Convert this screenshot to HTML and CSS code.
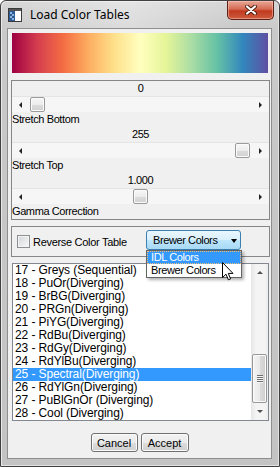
FILE: index.html
```html
<!DOCTYPE html>
<html lang="en">
<head>
    <meta charset="UTF-8">
    <title>Load Color Tables</title>
    <link rel="stylesheet" href="styles.css">
</head>
<body>
    <div class="window">
        <div class="titlebar">
            <svg class="app-icon" viewBox="0 0 14 14" width="14" height="14">
                <rect x="0.5" y="0.5" width="13" height="13" fill="#fff" stroke="#3a3a3a"/>
                <rect x="1" y="1" width="12" height="2" fill="#555"/>
                <rect x="1" y="3" width="6" height="10" fill="#2d5c96"/>
                <rect x="2" y="4" width="2" height="2" fill="#8fb2dc"/>
                <rect x="4" y="6" width="2" height="2" fill="#8fb2dc"/>
                <rect x="2" y="8" width="2" height="2" fill="#8fb2dc"/>
                <rect x="4" y="10" width="2" height="2" fill="#8fb2dc"/>
            </svg>
            <span class="title">Load Color Tables</span>
            <div class="close-btn">
                <svg viewBox="0 0 12 10" width="12" height="10">
                    <path d="M2 1.5 L10 8.5 M10 1.5 L2 8.5" stroke="#4a1c10" stroke-width="4" stroke-linecap="round"/>
                    <path d="M2 1.5 L10 8.5 M10 1.5 L2 8.5" stroke="#fff" stroke-width="2.2" stroke-linecap="round"/>
                </svg>
            </div>
        </div>

        <div class="client">
            <div class="spectrum"></div>

            <div class="group sliders">
                <div class="value">0</div>
                <div class="slider">
                    <span class="arrow left"></span>
                    <div class="track"><div class="thumb" style="margin-left: 1px"></div></div>
                    <span class="arrow right"></span>
                </div>
                <div class="label">Stretch Bottom</div>

                <div class="value">255</div>
                <div class="slider">
                    <span class="arrow left"></span>
                    <div class="track"><div class="thumb" style="margin-left: 206px"></div></div>
                    <span class="arrow right"></span>
                </div>
                <div class="label">Stretch Top</div>

                <div class="value">1.000</div>
                <div class="slider">
                    <span class="arrow left"></span>
                    <div class="track"><div class="thumb" style="margin-left: 104px"></div></div>
                    <span class="arrow right"></span>
                </div>
                <div class="label">Gamma Correction</div>
            </div>

            <div class="group options">
                <span class="check-box"></span>
                <span class="check-label">Reverse Color Table</span>
                <div class="combo">
                    <span>Brewer Colors</span>
                    <span class="caret"></span>
                    <ul class="dropdown">
                        <li class="sel">IDL Colors</li>
                        <li>Brewer Colors</li>
                    </ul>
                </div>
            </div>

            <div class="listbox">
                <ul class="items">
                    <li>17 - Greys (Sequential)</li>
                    <li>18 - PuOr(Diverging)</li>
                    <li>19 - BrBG(Diverging)</li>
                    <li>20 - PRGn(Diverging)</li>
                    <li>21 - PiYG(Diverging)</li>
                    <li>22 - RdBu(Diverging)</li>
                    <li>23 - RdGy(Diverging)</li>
                    <li>24 - RdYlBu(Diverging)</li>
                    <li class="sel">25 - Spectral(Diverging)</li>
                    <li>26 - RdYlGn(Diverging)</li>
                    <li>27 - PuBlGnOr (Diverging)</li>
                    <li>28 - Cool (Diverging)</li>
                </ul>
                <div class="vscroll">
                    <div class="sb-btn"><span class="sb-up"></span></div>
                    <div class="sb-gap"></div>
                    <div class="sb-thumb">
                        <span class="grip"></span>
                    </div>
                    <div class="sb-btn"><span class="sb-down"></span></div>
                </div>
            </div>

            <div class="buttons">
                <button class="btn cancel">Cancel</button>
                <button class="btn accept">Accept</button>
            </div>
        </div>
    </div>

    <svg class="cursor" viewBox="0 0 12 19" width="12" height="19">
        <path d="M0.5 0.5 V15.5 L4 12.2 L6.4 17.8 L8.6 16.9 L6.3 11.4 H11 Z" fill="#fff" stroke="#000" stroke-linejoin="round"/>
    </svg>
</body>
</html>
```

FILE: styles.css
```css
* { box-sizing: border-box; }

body {
    margin: 0;
    width: 280px;
    height: 467px;
    position: relative;
    overflow: hidden;
    background: #fff;
    font-family: "Liberation Sans", Arial, sans-serif;
    font-size: 11px;
    letter-spacing: -0.4px;
    color: #000;
}

.window {
    height: 467px;
    display: flex;
    flex-direction: column;
    padding: 0 7px 7px 6px;
    border: 1px solid #404040;
    border-radius: 6px 6px 0 0;
    background: linear-gradient(#d6d6d6, #c9c9c9 30px, #c3c3c3);
    box-shadow: inset 1px 1px 0 #e9e9e9, inset -1px -1px 0 #e2e2e2;
}

.titlebar {
    height: 27px;
    margin: 0 -7px 0 -6px;
    padding-left: 7px;
    display: flex;
    align-items: flex-start;
    background: linear-gradient(90deg, rgba(255,255,255,0) 0%, rgba(255,255,255,0.35) 45%, rgba(255,255,255,0) 85%);
}

.app-icon { margin-top: 7px; flex: none; }

.title {
    margin: 6px 0 0 8px;
    font-family: "Noto Sans", "Open Sans", sans-serif;
    font-size: 12px;
    letter-spacing: 0;
    line-height: 16px;
}

.close-btn {
    margin-left: auto;
    margin-right: 5px;
    width: 47px;
    height: 19px;
    display: flex;
    align-items: center;
    justify-content: center;
    border: 1px solid #5c2215;
    border-top: none;
    border-radius: 0 0 5px 5px;
    background: linear-gradient(#e8a898, #d66a52 45%, #c13a20 55%, #cd5b3d);
    box-shadow: inset 0 0 0 1px rgba(255,200,190,0.5);
}

.client {
    flex: 1;
    display: flex;
    flex-direction: column;
    align-items: flex-start;
    border: 1px solid #8e8e8e;
    background: #f0f0f0;
}

.spectrum {
    margin: 4px 0 0 4px;
    width: 256px;
    height: 40px;
    background: linear-gradient(90deg, #9e0142, #d53e4f 10%, #f46d43 20%, #fdae61 30%, #fee08b 40%, #ffffbf 50%, #e6f598 60%, #abdda4 70%, #66c2a5 80%, #3288bd 90%, #5e4fa2);
}

.group {
    margin: 7px 0 0 3px;
    width: 259px;
    border: 1px solid #868686;
}

.sliders {
    height: 140px;
    display: flex;
    flex-direction: column;
}

.value {
    height: 15px;
    line-height: 15px;
    text-align: center;
}

.label {
    height: 15px;
    line-height: 15px;
}

.slider {
    height: 16px;
    display: flex;
    border-top: 1px solid #e4e4e4;
    background: #f6f6f6;
}

.arrow {
    width: 17px;
    display: flex;
    align-items: center;
    justify-content: center;
}

.arrow::before {
    content: "";
    border-top: 3px solid transparent;
    border-bottom: 3px solid transparent;
}

.arrow.left::before { border-right: 3px solid #222; }
.arrow.right::before { border-left: 3px solid #222; }

.track {
    flex: 1;
    display: flex;
}

.thumb {
    width: 15px;
    height: 15px;
    border: 1px solid #9a9a9a;
    border-radius: 2px;
    background: linear-gradient(#f7f7f7, #ececec 50%, #dcdcdc 51%, #d2d2d2);
    box-shadow: inset 0 0 0 1px #fbfbfb;
}

.options {
    margin-top: 6px;
    height: 31px;
    display: flex;
    align-items: center;
    padding: 2px 28px 5px 5px;
}

.check-box {
    width: 13px;
    height: 13px;
    margin-top: 3px;
    border: 1px solid #8e8f8f;
    background: linear-gradient(135deg, #d3d6da, #f8f8f8);
    box-shadow: inset 0 0 0 1px #f4f4f4;
}

.check-label {
    margin: 3px 0 0 3px;
    letter-spacing: -0.3px;
}

.combo {
    position: relative;
    margin-left: auto;
    width: 95px;
    height: 20px;
    display: flex;
    align-items: center;
    padding-left: 6px;
    border: 1px solid #3c7fb1;
    border-radius: 3px;
    background: linear-gradient(#eaf6fd, #d9f0fc 50%, #bee6fd 51%, #a7d9f5);
}

.caret {
    margin: 1px 3px 0 auto;
    border-top: 4px solid #000;
    border-left: 3.5px solid transparent;
    border-right: 3.5px solid transparent;
}

.dropdown {
    position: absolute;
    top: 19px;
    left: -1px;
    width: 96px;
    height: 28px;
    margin: 0;
    padding: 0;
    list-style: none;
    border: 1px solid #646464;
    background: #fff;
    box-shadow: 2px 2px 3px rgba(0,0,0,0.3);
    z-index: 2;
}

.dropdown li {
    height: 13px;
    line-height: 13px;
    padding-left: 4px;
}

.dropdown li.sel {
    background: #3399ff;
    color: #fff;
    outline: 1px dotted #f0c080;
    outline-offset: -1px;
}

.listbox {
    margin: 6px 0 0 4px;
    width: 257px;
    height: 158px;
    display: flex;
    border: 1px solid #828790;
    background: #fff;
}

.items {
    flex: 1;
    margin: 0;
    padding: 0;
    list-style: none;
    font-size: 12px;
    letter-spacing: -0.1px;
}

.items li {
    height: 13px;
    line-height: 13px;
    padding-left: 2px;
    white-space: nowrap;
}

.items li.sel {
    background: #3399ff;
    color: #fff;
}

.vscroll {
    width: 17px;
    display: flex;
    flex-direction: column;
    background: linear-gradient(90deg, #e6e6e6, #f4f4f4 30%, #f4f4f4 80%, #ececec);
}

.sb-btn {
    height: 17px;
    display: flex;
    align-items: center;
    justify-content: center;
}

.sb-up, .sb-down {
    border-left: 3px solid transparent;
    border-right: 3px solid transparent;
}

.sb-up { border-bottom: 3px solid #505050; }
.sb-down { border-top: 3px solid #505050; }

.sb-gap { height: 73px; }

.sb-thumb {
    height: 49px;
    margin: 0 1px;
    display: flex;
    align-items: center;
    justify-content: center;
    border: 1px solid #979797;
    border-radius: 2px;
    background: linear-gradient(90deg, #f4f4f4, #e9e9e9 50%, #dadada 51%, #cfcfcf);
    box-shadow: inset 0 0 0 1px #fafafa;
}

.grip {
    width: 6px;
    height: 8px;
    background: repeating-linear-gradient(#6e6e6e 0, #6e6e6e 1px, #f6f6f6 1px, #f6f6f6 2px);
}

.buttons {
    align-self: stretch;
    display: flex;
    justify-content: center;
    gap: 3px;
    margin-top: 12px;
}

.btn {
    height: 19px;
    padding: 0;
    font: inherit;
    color: #000;
    border: 1px solid #707070;
    border-radius: 3px;
    background: linear-gradient(#f2f2f2, #ebebeb 50%, #dddddd 51%, #cfcfcf);
    box-shadow: inset 0 0 0 1px #fbfbfb;
}

.cancel { width: 47px; }
.accept { width: 48px; }

.cursor {
    position: absolute;
    left: 222px;
    top: 262px;
    z-index: 5;
}
```
